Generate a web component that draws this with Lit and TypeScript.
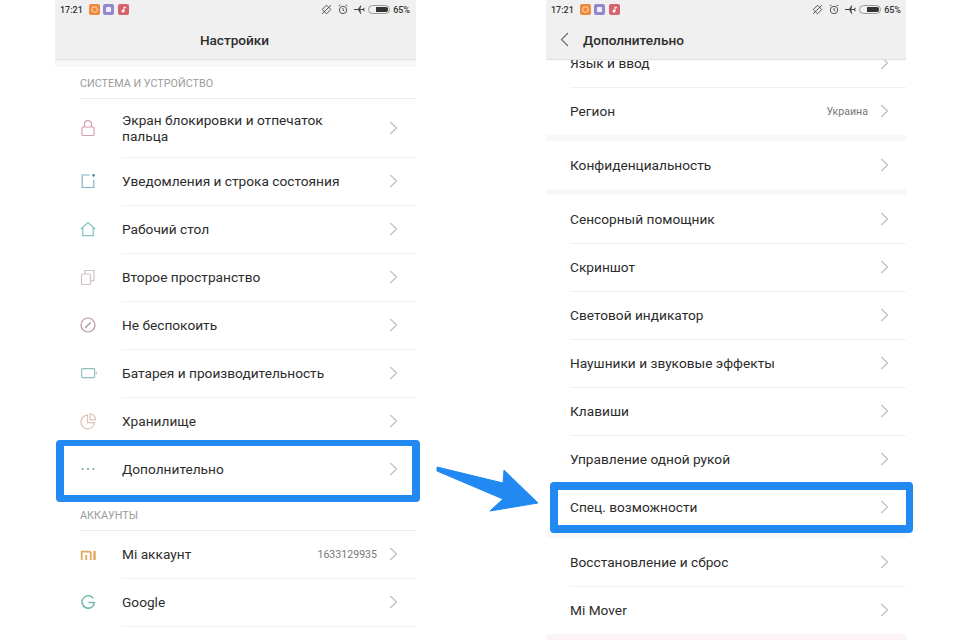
import { LitElement, html, css, svg } from "lit";
import { customElement } from "lit/decorators.js";

const chevron = html`<svg class="chev" width="9" height="14" viewBox="0 0 9 14"><path d="M1.2 1 L7.6 7 L1.2 13" fill="none" stroke="#bdbdbd" stroke-width="1.1"/></svg>`;

const ic = (color: string, body: any) => html`<svg class="ic" width="18" height="18" viewBox="0 0 18 18" fill="none" stroke=${color} stroke-width="1.2">${body}</svg>`;

const icons: Record<string, any> = {
  lock: ic("#d8a0ac", svg`<rect x="3" y="8" width="12" height="8.5" rx="1"/><path d="M5.5 8V5.2a3.5 3.5 0 0 1 7 0V8"/>`),
  notif: ic("#7fb7c4", svg`<path d="M10.500 3H3.200v12.500h11.600V8"/><circle cx="14.600" cy="3.400" r="1.300" fill="#3d8fa5" stroke="none"/>`),
  home: ic("#86c4bd", svg`<path d="M1.800 9.200 9 2.600l7.200 6.600M3.800 8v7.600h10.400V8"/>`),
  space: ic("#cfc0cc", svg`<rect x="2.500" y="6" width="9" height="10.500" rx="1"/><path d="M6 6V2.500h9v10.200h-3.500"/>`),
  dnd: ic("#b9949c", svg`<circle cx="9" cy="9" r="7"/><path d="M6.200 11.800 11.600 6.400" stroke-width="1.400"/>`),
  battery: ic("#8cc0bc", svg`<rect x="2.600" y="4.600" width="13" height="9" rx="1.200"/><path d="M17.300 7.500v3" stroke="#b5d3d0"/>`),
  storage: ic("#dcc4b4", svg`<path d="M8.500 3.200a6.800 6.800 0 1 0 7 7.400h-7Z"/><path d="M11 1.800a6.400 6.400 0 0 1 5.600 6H11Z"/>`),
  more: html`<svg class="ic" width="18" height="18" viewBox="0 0 18 18" fill="#6f9aa5"><circle cx="3.500" cy="9" r="1"/><circle cx="9" cy="9" r="1"/><circle cx="14.500" cy="9" r="1"/></svg>`,
  mi: ic("#e0a860", svg`<path d="M2.700 5.800V15M2.700 6.700h7.400a1.700 1.700 0 0 1 1.700 1.700V15M7.200 10v5" stroke-width="1.800"/><path d="M15.500 5.800V15" stroke-width="2.400"/>`),
  google: ic("#74b8ac", svg`<path d="M14.300 5.400a6.200 6.200 0 1 0 1.100 4.200H9.500" stroke-width="1.500"/>`),
};

const statusBar = html`<div class="status">
  <span class="time">17:21</span>
  <span class="app a1"><svg viewBox="0 0 11 11"><circle cx="5.500" cy="5.500" r="2.800" fill="none" stroke="#fff" stroke-opacity=".7"/></svg></span>
  <span class="app a2"><svg viewBox="0 0 11 11"><rect x="3" y="3" width="5" height="5" rx=".8" fill="#fff" fill-opacity=".85"/></svg></span>
  <span class="app a3"><svg viewBox="0 0 11 11"><circle cx="5" cy="7" r="1.500" fill="#fff"/><path d="M6 7V3l2 .8" fill="none" stroke="#fff"/></svg></span>
  <span class="spacer"></span>
  <svg width="11" height="11" viewBox="0 0 11 11" fill="none" stroke="#555" stroke-width="1"><path d="M5.500 1.200 9.800 5.500 5.500 9.800 1.200 5.500ZM1 9.800 10 1.200"/></svg>
  <svg width="10" height="11" viewBox="0 0 10 11" fill="none" stroke="#555" stroke-width="1"><circle cx="5" cy="6" r="3.700"/><path d="M5 4v2.200l1.300.8M.8 2 2.400.8M9.200 2 7.600.8"/></svg>
  <svg width="11" height="11" viewBox="0 0 12 11" fill="#444"><path d="M0 5h4.500l2.500-4h1L6.800 5h3l1-1.400h1L11 5.500l.8 1.900h-1l-1-1.400H6.800L8 10H7L4.500 6H0Z"/></svg>
  <span class="batt"><i></i></span>
  <span class="pct">65%</span>
</div>`;

interface Row { t: string; icon?: string; val?: string; h?: number }

const left: Row[] = [
  { t: "Экран блокировки и отпечаток пальца", icon: "lock", h: 59 },
  { t: "Уведомления и строка состояния", icon: "notif" },
  { t: "Рабочий стол", icon: "home" },
  { t: "Второе пространство", icon: "space" },
  { t: "Не беспокоить", icon: "dnd" },
  { t: "Батарея и производительность", icon: "battery" },
  { t: "Хранилище", icon: "storage" },
  { t: "Дополнительно", icon: "more" },
];
const accounts: Row[] = [
  { t: "Mi аккаунт", icon: "mi", val: "1633129935" },
  { t: "Google", icon: "google" },
];
const rightGroups: Row[][] = [
  [{ t: "Язык и ввод" }, { t: "Регион", val: "Украина" }],
  [{ t: "Конфиденциальность" }],
  [
    { t: "Сенсорный помощник" }, { t: "Скриншот" }, { t: "Световой индикатор" },
    { t: "Наушники и звуковые эффекты" }, { t: "Клавиши" },
    { t: "Управление одной рукой" }, { t: "Спец. возможности" },
  ],
  [{ t: "Восстановление и сброс" }, { t: "Mi Mover" }],
];

@customElement("app-root")
export class AppRoot extends LitElement {
  static styles = css`
    :host { display: block; width: 958px; height: 640px; position: relative; overflow: hidden; background: #fff;
      font-family: Roboto, "Noto Sans", sans-serif; color: #2c2c2c; }
    .page { display: flex; gap: 130px; padding-left: 55px; height: 640px; }
    .phone { width: 361px; height: 640px; overflow: hidden; position: relative; background: #fff; display: flex; flex-direction: column; }
    .phone + .phone { width: 360px; }
    .phone + .phone .body { padding-right: 17px; }
    .phone + .phone .status { padding-right: 5px; }
    .top { background: #f0f0f0; height: 59px; flex: none; position: relative; z-index: 1; box-shadow: 0 1px 1px #e2e2e2; }
    .status { display: flex; align-items: center; gap: 3px; height: 19px; padding: 0 6px 0 5px; font-size: 9px; font-weight: 500; color: #333; box-sizing: border-box; }
    .status > svg { margin-left: 3px; }
    .time { margin-right: 2px; width: 24px; }
    .app { width: 11px; height: 11px; border-radius: 2px; margin-right: .4px; display: block; }
    .app svg { display: block; width: 11px; height: 11px; }
    .a1 { background: #ef8a3c; } .a2 { background: #9388d0; } .a3 { background: #d9636d; }
    .spacer { flex: 1; }
    .batt { width: 22px; height: 9px; border: 1px solid #999; border-radius: 4.5px; box-sizing: border-box; padding: 1px 1px 1px 7px; display: flex; }
    .batt i { flex: 1; background: #333; border-radius: 0 2px 2px 0; }
    .pct { font-weight: 500; }
    .title { height: 40px; box-sizing: border-box; padding: 1px 2px 0 0; display: flex; align-items: center; justify-content: center; font-size: 13.6px; font-weight: 500; color: #2c2c2c; }
    .title.back { justify-content: flex-start; padding-left: 14px; gap: 14px; }
    .title.back svg { flex: none; }
    .strip { height: 8px; background: #f7f7f7; flex: none; }
    .label { font-size: 10.8px; color: #9b9b9b; box-sizing: border-box; margin-left: 25px; display: flex; align-items: center; border-bottom: 1px solid #ececec; }
    .label.first { height: 32px; padding-top: 2px; }
    .label.second { height: 38px; padding-top: 7px; }
    .list { margin-top: -1px; }
    .row { height: 48px; box-sizing: border-box; display: flex; align-items: center; padding-left: 24px; font-size: 13.7px; color: #2c2c2c; }
    .row .ic { flex: none; width: 18px; margin-right: 25px; }
    .row .body { flex: 1; display: flex; align-items: center; height: 100%; padding-right: 18px; }
    .row + .row .body { box-shadow: inset 0 1px 0 #f0f0f0; }
    .row .text { flex: 1; line-height: 16px; }
    .row .text.wrap { flex: none; width: 225px; margin-right: auto; }
    .row .val { font-size: 10.6px; color: #777; margin-right: 12px; }
    .tail { margin-left: 67px; border-top: 1px solid #f0f0f0; }
    .right-list { margin-top: -20px; display: flex; flex-direction: column; }
    .gap { height: 6px; background: #f8f8f8; flex: none; }
    .gap.wide { height: 7px; }
    .gap.pink { height: 8px; background: #fbf3f5; }
    .hl { position: absolute; box-sizing: border-box; border: solid #2189f1; border-radius: 4px; pointer-events: none; z-index: 2; }
    .hl.l { left: 56px; top: 440px; width: 364px; height: 62px; border-width: 6px 8px 7px; }
    .hl.r { left: 550px; top: 482px; width: 363px; height: 51px; border-width: 8px 7px 8px 8px; }
    .arrow { position: absolute; left: 430px; top: 460px; z-index: 2; }
  `;

  private row(r: Row) {
    return html`<div class="row" style=${r.h ? `height:${r.h}px` : ""}>
      ${r.icon ? icons[r.icon] : ""}
      <div class="body">
        <span class="text ${r.h ? "wrap" : ""}">${r.t}</span>
        ${r.val ? html`<span class="val">${r.val}</span>` : ""}
        ${chevron}
      </div>
    </div>`;
  }

  render() {
    return html`<div class="page">
      <section class="phone">
        <div class="top">${statusBar}<div class="title">Настройки</div></div>
        <div class="strip"></div>
        <div class="label first">СИСТЕМА И УСТРОЙСТВО</div>
        <div class="list">${left.map((r) => this.row(r))}</div>
        <div class="label second">АККАУНТЫ</div>
        <div class="list">${accounts.map((r) => this.row(r))}</div>
        <div class="tail"></div>
      </section>
      <section class="phone">
        <div class="top">${statusBar}
          <div class="title back">
            <svg width="9" height="15" viewBox="0 0 9 15"><path d="M8 1 1.500 7.500 8 14" fill="none" stroke="#666" stroke-width="1.100"/></svg>
            <span>Дополнительно</span>
          </div>
        </div>
        <div class="right-list">
          ${rightGroups.map((g, i) => html`
            <div class="group">${g.map((r) => this.row(r))}</div>
            <div class="gap ${i === 3 ? "pink" : i === 2 ? "wide" : ""}"></div>`)}
        </div>
      </section>
    </div>
    <div class="hl l"></div>
    <div class="hl r"></div>
    <svg class="arrow" width="115" height="55" viewBox="430 460 115 55">
      <path d="M437 467 503 483 504 470 538 503 490 511 503 499 437 471Z" fill="#2189f1" stroke="#2189f1" stroke-linejoin="round"/>
    </svg>`;
  }
}
